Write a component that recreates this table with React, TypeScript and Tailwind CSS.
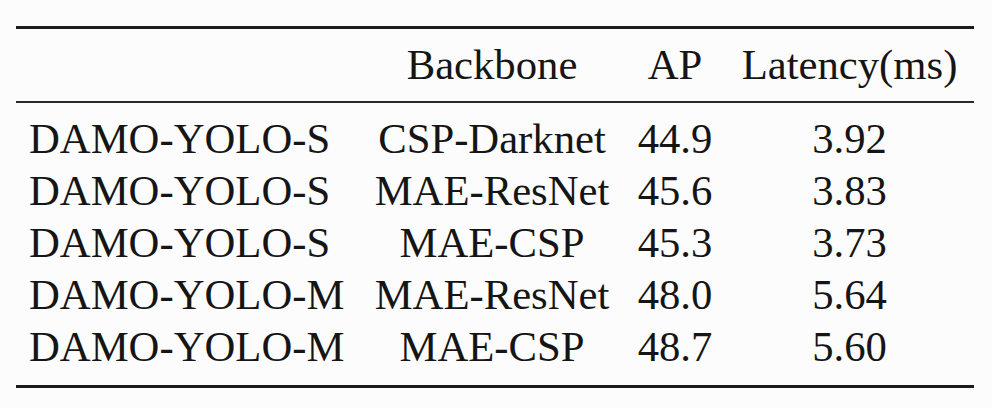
const rows = [
  ["DAMO-YOLO-S", "CSP-Darknet", "44.9", "3.92"],
  ["DAMO-YOLO-S", "MAE-ResNet", "45.6", "3.83"],
  ["DAMO-YOLO-S", "MAE-CSP", "45.3", "3.73"],
  ["DAMO-YOLO-M", "MAE-ResNet", "48.0", "5.64"],
  ["DAMO-YOLO-M", "MAE-CSP", "48.7", "5.60"],
];

const grid = "grid grid-cols-[344px_264px_102px_247px]";

export default function App() {
  return (
    <div className="w-[992px] h-[408px] bg-[#fcfcfc] pt-[26px] pl-[16px] text-[#151515] font-['Liberation_Serif','Times_New_Roman',serif]">
      <div className="w-[958px] flex flex-col text-[42.7px] leading-[52px]">
        <div className="h-[3px] bg-[#1c1c1c]" />
        <div className={`${grid} py-[10px]`}>
          <div />
          <div className="text-center">Backbone</div>
          <div className="text-center">AP</div>
          <div className="text-center">Latency(ms)</div>
        </div>
        <div className="h-[2px] bg-[#2a2a2a]" />
        <div className="pt-[10px] pb-[12px] flex flex-col">
          {rows.map((r, i) => (
            <div key={i} className={grid}>
              <div className="pl-[13px]">{r[0]}</div>
              <div className="text-center">{r[1]}</div>
              <div className="text-center">{r[2]}</div>
              <div className="text-center">{r[3]}</div>
            </div>
          ))}
        </div>
        <div className="h-[3px] bg-[#1c1c1c]" />
      </div>
    </div>
  );
}
